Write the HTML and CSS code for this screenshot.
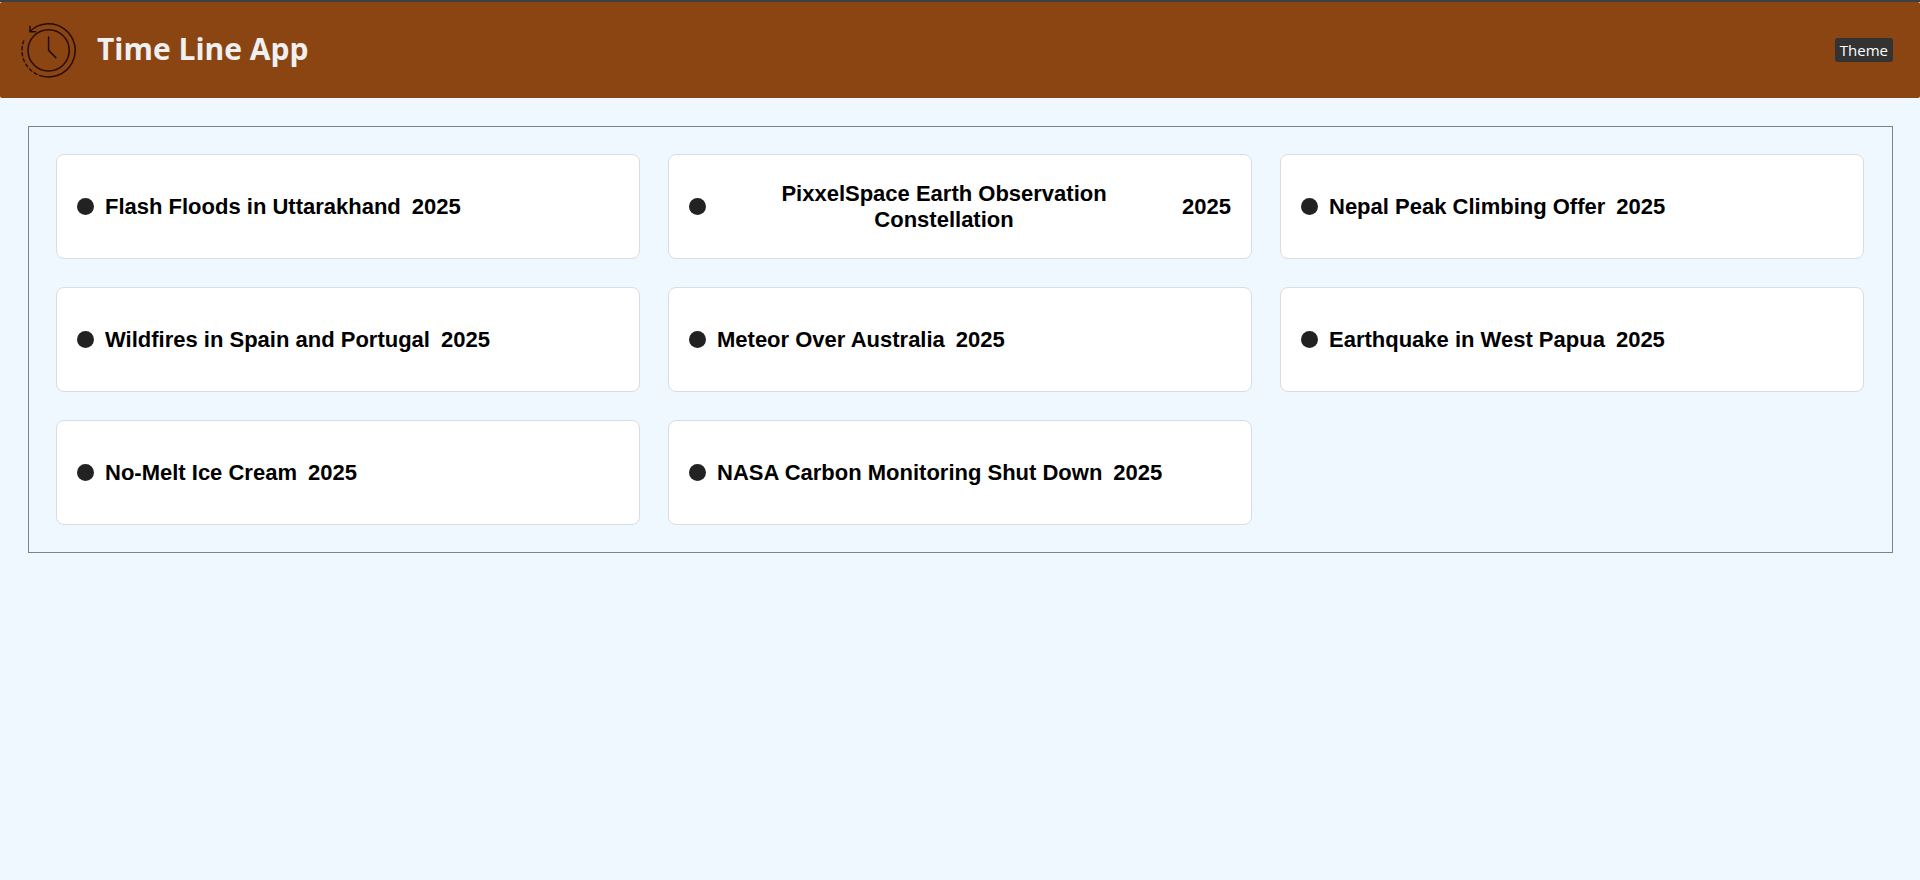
FILE: index.html
```html
<!DOCTYPE html>
<html lang="en">
<head>
<meta charset="utf-8">
<title>Time Line App</title>
<link rel="stylesheet" href="styles.css">
</head>
<body>
<header class="header">
  <div class="brand">
    <svg class="logo" viewBox="0 0 56 56" aria-hidden="true">
      <circle cx="28.6" cy="28.4" r="20.6"/>
      <path d="M10.200 9.200A26.600 26.600 0 1 1 19.500 53.400"/>
      <path d="M10 4.500V9.700H15.500"/>
      <path class="dashes" d="M3.700 19A26.600 26.600 0 0 0 19.500 53.400"/>
      <path d="M28.600 15V28.400L35.800 35.600"/>
    </svg>
    <h1 class="title">Time Line App</h1>
  </div>
  <button class="theme" type="button">Theme</button>
</header>
<main class="timeline">
  <article class="card"><span class="dot"></span><h2 class="name">Flash Floods in Uttarakhand</h2><span class="year">2025</span></article>
  <article class="card"><span class="dot"></span><h2 class="name">PixxelSpace Earth Observation Constellation</h2><span class="year">2025</span></article>
  <article class="card"><span class="dot"></span><h2 class="name">Nepal Peak Climbing Offer</h2><span class="year">2025</span></article>
  <article class="card"><span class="dot"></span><h2 class="name">Wildfires in Spain and Portugal</h2><span class="year">2025</span></article>
  <article class="card"><span class="dot"></span><h2 class="name">Meteor Over Australia</h2><span class="year">2025</span></article>
  <article class="card"><span class="dot"></span><h2 class="name">Earthquake in West Papua</h2><span class="year">2025</span></article>
  <article class="card"><span class="dot"></span><h2 class="name">No-Melt Ice Cream</h2><span class="year">2025</span></article>
  <article class="card"><span class="dot"></span><h2 class="name">NASA Carbon Monitoring Shut Down</h2><span class="year">2025</span></article>
</main>
</body>
</html>
```
FILE: styles.css
```css
* {
  box-sizing: border-box;
}

body {
  margin: 0;
  border-top: 2px solid #3c4043;
  background: #eff7ff;
  color: #000;
  font-family: "Liberation Sans", Arial, sans-serif;
}

.header {
  display: flex;
  align-items: center;
  justify-content: space-between;
  padding: 20px 27px 20px 20px;
  border-radius: 2px;
  background: #8b4513;
}

.brand {
  display: flex;
  align-items: center;
  gap: 21px;
}

.logo {
  width: 56px;
  height: 56px;
  fill: none;
  stroke: #260c03;
  stroke-width: 1.5;
  stroke-linecap: round;
}

.dashes {
  stroke-dasharray: 3 3;
}

.title {
  margin: 0;
  padding-bottom: 2px;
  color: #f0f0f0;
  font-family: "Open Sans", sans-serif;
  font-size: 30px;
  line-height: 40px;
  font-weight: 700;
}

.theme {
  padding: 2px 5px;
  border: 0;
  border-radius: 3px;
  background: #333;
  color: #fff;
  font-family: "Open Sans", sans-serif;
  font-size: 15px;
  line-height: 20px;
}

.timeline {
  display: grid;
  grid-template-columns: repeat(3, 1fr);
  gap: 28px;
  margin: 28px 27px 28px 28px;
  padding: 27px 28px 27px 27px;
  border: 1px solid #778390;
}

.card {
  display: flex;
  align-items: center;
  gap: 11px;
  min-height: 105px;
  padding: 20px;
  border: 1px solid #d9dde1;
  border-radius: 8px;
  background: #fff;
  font-size: 22px;
  line-height: 26px;
  font-weight: 700;
}

.dot {
  flex: none;
  width: 17px;
  height: 17px;
  border-radius: 50%;
  background: #222;
}

.name {
  margin: 0;
  font-size: 22px;
  font-weight: 700;
  text-align: center;
}
```
